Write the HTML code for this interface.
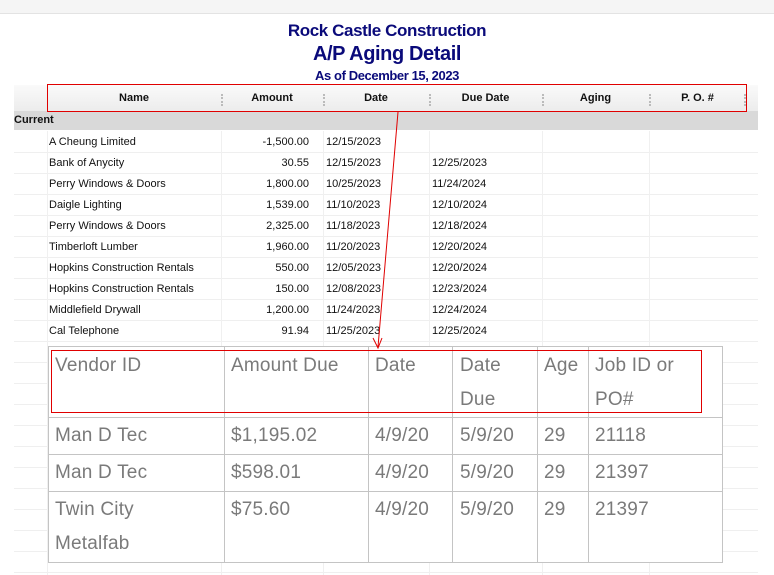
<!DOCTYPE html>
<html><head><meta charset="utf-8"><style>
*{margin:0;padding:0;box-sizing:border-box}
body{width:774px;height:575px;background:#fff;position:relative;overflow:hidden;font-family:"Liberation Sans",Arial,sans-serif}
.a{position:absolute}
.t{color:#0a0a7a;font-weight:bold;text-align:center;width:774px;left:0;letter-spacing:-0.4px}
.hd{font-size:11px;font-weight:bold;color:#111;text-align:center;top:92px}
.r{font-size:11px;color:#111;white-space:nowrap}
.ov{font-size:19px;color:#7a7a7a;font-weight:300;letter-spacing:0.2px}
</style></head><body>
<div class="a" style="left:0;top:0;width:774px;height:14px;background:#f5f5f5;border-bottom:1px solid #e3e3e3"></div>
<div class="a t" style="top:21px;font-size:17px">Rock Castle Construction</div>
<div class="a t" style="top:43px;font-size:20px">A/P Aging Detail</div>
<div class="a t" style="top:68px;font-size:13px">As of December 15, 2023</div>
<div class="a" style="left:14px;top:85px;width:744px;height:26px;background:linear-gradient(#fafafa,#ececec)"></div>
<div class="a hd" style="left:47px;width:174px">Name</div>
<div class="a hd" style="left:221px;width:102px">Amount</div>
<div class="a hd" style="left:323px;width:106px">Date</div>
<div class="a hd" style="left:429px;width:113px">Due Date</div>
<div class="a hd" style="left:542px;width:107px">Aging</div>
<div class="a hd" style="left:649px;width:97px">P. O. #</div>
<div class="a" style="left:221px;top:94px;height:12px;border-left:2px dotted #bbb"></div>
<div class="a" style="left:323px;top:94px;height:12px;border-left:2px dotted #bbb"></div>
<div class="a" style="left:429px;top:94px;height:12px;border-left:2px dotted #bbb"></div>
<div class="a" style="left:542px;top:94px;height:12px;border-left:2px dotted #bbb"></div>
<div class="a" style="left:649px;top:94px;height:12px;border-left:2px dotted #bbb"></div>
<div class="a" style="left:744px;top:94px;height:12px;border-left:2px dotted #bbb"></div>
<div class="a" style="left:14px;top:111px;width:744px;height:19px;background:#d9d9d9"></div>
<div class="a" style="left:14px;top:114px;font-size:11px;font-weight:bold;color:#111">Current</div>
<div id="rows"></div>
<script>
var d=[["A Cheung Limited","-1,500.00","12/15/2023",""],["Bank of Anycity","30.55","12/15/2023","12/25/2023"],["Perry Windows & Doors","1,800.00","10/25/2023","11/24/2024"],["Daigle Lighting","1,539.00","11/10/2023","12/10/2024"],["Perry Windows & Doors","2,325.00","11/18/2023","12/18/2024"],["Timberloft Lumber","1,960.00","11/20/2023","12/20/2024"],["Hopkins Construction Rentals","550.00","12/05/2023","12/20/2024"],["Hopkins Construction Rentals","150.00","12/08/2023","12/23/2024"],["Middlefield Drywall","1,200.00","11/24/2023","12/24/2024"],["Cal Telephone","91.94","11/25/2023","12/25/2024"]];
var h="";
for(var i=0;i<d.length;i++){var y=131+i*21;
h+='<div class="a r" style="left:49px;top:'+(y+5)+'px">'+d[i][0].replace("&","&amp;")+'</div>';
h+='<div class="a r" style="left:221px;width:88px;text-align:right;top:'+(y+5)+'px">'+d[i][1]+'</div>';
h+='<div class="a r" style="left:326px;top:'+(y+5)+'px">'+d[i][2]+'</div>';
h+='<div class="a r" style="left:432px;top:'+(y+5)+'px">'+d[i][3]+'</div>';
}
for(var i=0;i<21;i++){h+='<div class="a" style="left:14px;top:'+(152+i*21)+'px;width:744px;height:1px;background:#efefef"></div>';}
[47,221,323,429,542,649].forEach(function(x){h+='<div class="a" style="left:'+x+'px;top:131px;width:1px;height:444px;background:#f0f0f0"></div>';});
document.getElementById("rows").innerHTML=h;
</script>
<div class="a" style="left:47px;top:84px;width:700px;height:28px;border:1px solid #e00000"></div>
<div class="a" style="left:48px;top:346px;width:675px;height:217px;background:#fff;border:1px solid #c4c4c4"></div>
<div class="a" style="left:48px;top:417px;width:675px;height:1px;background:#c4c4c4"></div>
<div class="a" style="left:48px;top:454px;width:675px;height:1px;background:#c4c4c4"></div>
<div class="a" style="left:48px;top:491px;width:675px;height:1px;background:#c4c4c4"></div>
<div class="a" style="left:224px;top:346px;width:1px;height:217px;background:#c4c4c4"></div>
<div class="a" style="left:368px;top:346px;width:1px;height:217px;background:#c4c4c4"></div>
<div class="a" style="left:452px;top:346px;width:1px;height:217px;background:#c4c4c4"></div>
<div class="a" style="left:537px;top:346px;width:1px;height:217px;background:#c4c4c4"></div>
<div class="a" style="left:588px;top:346px;width:1px;height:217px;background:#c4c4c4"></div>
<div class="a" style="left:51px;top:350px;width:651px;height:63px;border:1px solid #e00000"></div>
<div class="a ov" style="left:55px;top:349px;line-height:34px">Vendor ID</div>
<div class="a ov" style="left:231px;top:349px;line-height:34px">Amount Due</div>
<div class="a ov" style="left:375px;top:349px;line-height:34px">Date</div>
<div class="a ov" style="left:460px;top:349px;line-height:34px">Date<br>Due</div>
<div class="a ov" style="left:544px;top:349px;line-height:34px">Age</div>
<div class="a ov" style="left:595px;top:349px;line-height:34px">Job ID or<br>PO#</div>
<div class="a ov" style="left:55px;top:419px;line-height:34px">Man D Tec</div>
<div class="a ov" style="left:231px;top:419px;line-height:34px">$1,195.02</div>
<div class="a ov" style="left:375px;top:419px;line-height:34px">4/9/20</div>
<div class="a ov" style="left:460px;top:419px;line-height:34px">5/9/20</div>
<div class="a ov" style="left:544px;top:419px;line-height:34px">29</div>
<div class="a ov" style="left:595px;top:419px;line-height:34px">21118</div>
<div class="a ov" style="left:55px;top:456px;line-height:34px">Man D Tec</div>
<div class="a ov" style="left:231px;top:456px;line-height:34px">$598.01</div>
<div class="a ov" style="left:375px;top:456px;line-height:34px">4/9/20</div>
<div class="a ov" style="left:460px;top:456px;line-height:34px">5/9/20</div>
<div class="a ov" style="left:544px;top:456px;line-height:34px">29</div>
<div class="a ov" style="left:595px;top:456px;line-height:34px">21397</div>
<div class="a ov" style="left:55px;top:493px;line-height:34px">Twin City<br>Metalfab</div>
<div class="a ov" style="left:231px;top:493px;line-height:34px">$75.60</div>
<div class="a ov" style="left:375px;top:493px;line-height:34px">4/9/20</div>
<div class="a ov" style="left:460px;top:493px;line-height:34px">5/9/20</div>
<div class="a ov" style="left:544px;top:493px;line-height:34px">29</div>
<div class="a ov" style="left:595px;top:493px;line-height:34px">21397</div>
<svg class="a" style="left:0;top:0" width="774" height="575"><line x1="398" y1="112" x2="378" y2="347" stroke="#e00000" stroke-width="1"/><path d="M373 338 L378 348 L382 338" fill="none" stroke="#e00000" stroke-width="1"/></svg>
</body></html>
